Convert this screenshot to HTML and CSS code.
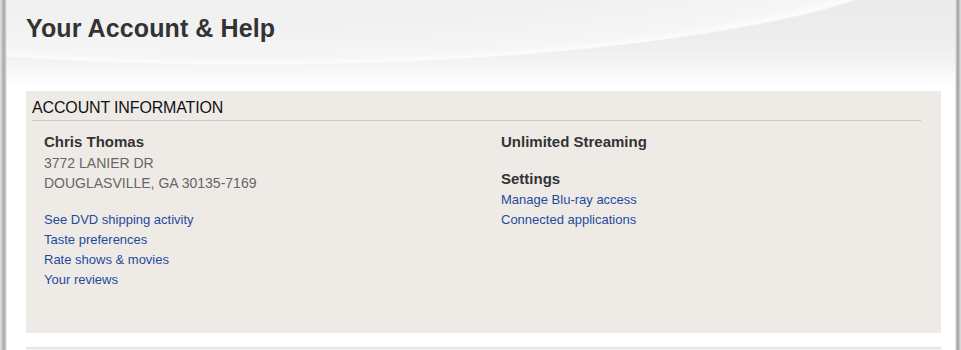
FILE: index.html
```html
<!DOCTYPE html>
<html lang="en">
<head>
<meta charset="utf-8">
<title>Your Account &amp; Help</title>
<link rel="stylesheet" href="styles.css">
</head>
<body>
<div class="frame">
  <header class="page-head">
    <h1 class="page-title">Your Account &amp; Help</h1>
  </header>
  <section class="panel">
    <h2 class="panel-title">ACCOUNT INFORMATION</h2>
    <div class="cols">
      <div class="col">
        <div class="name">Chris Thomas</div>
        <div class="address">
          <div>3772 LANIER DR</div>
          <div>DOUGLASVILLE, GA 30135-7169</div>
        </div>
        <ul class="links links-gap">
          <li><a href="#">See DVD shipping activity</a></li>
          <li><a href="#">Taste preferences</a></li>
          <li><a href="#">Rate shows &amp; movies</a></li>
          <li><a href="#">Your reviews</a></li>
        </ul>
      </div>
      <div class="col">
        <div class="name">Unlimited Streaming</div>
        <div class="name settings">Settings</div>
        <ul class="links">
          <li><a href="#">Manage Blu-ray access</a></li>
          <li><a href="#">Connected applications</a></li>
        </ul>
      </div>
    </div>
  </section>
  <section class="panel-next"></section>
</div>
</body>
</html>
```
FILE: styles.css
```css
html, body {
  margin: 0;
  padding: 0;
}
body {
  background:
    linear-gradient(to right, #e6e6e6 0, #c4c4c4 2px, #a8a8a8 4px, #b8b8b8 5px, #dcdcdc 6px, #f4f4f4 7px, transparent 7px),
    linear-gradient(to left, #e2e2e2 0, #bcbcbc 2px, #9e9e9e 3px, #b0b0b0 4px, #d6d6d6 5px, #f2f2f2 6px, transparent 6px),
    #ffffff;
  font-family: "Liberation Sans", Arial, sans-serif;
  height: 350px;
  overflow: hidden;
}
.frame {
  margin: 0 6px 0 7px;
}
.page-head {
  height: 91px;
  box-sizing: border-box;
  padding: 13px 0 0 19px;
  background:
    radial-gradient(ellipse 700px 128px at 243px -63px, #eeeeee 0%, #f1f1f1 70%, #f6f6f6 95%, #fcfcfc 99%, rgba(255,255,255,0) 100%),
    linear-gradient(to bottom, #ebebeb 0, #eeeeee 50%, #f7f7f7 78%, #ffffff 95%);
}
.page-title {
  margin: 0;
  font-size: 25px;
  line-height: 30px;
  font-weight: bold;
  color: #333333;
  letter-spacing: 0.1px;
}
.panel {
  margin: 0 14px 0 19px;
  height: 242px;
  box-sizing: border-box;
  padding: 7px 20px 0 6px;
  background: #eeebe7;
}
.panel-title {
  margin: 0;
  font-size: 16px;
  line-height: 19px;
  font-weight: normal;
  color: #111111;
  padding-bottom: 3px;
  border-bottom: 1px solid #cbc8c4;
  letter-spacing: -0.15px;
}
.cols {
  display: grid;
  grid-template-columns: 457px 1fr;
  padding: 11px 0 0 12px;
}
.name {
  font-size: 15px;
  line-height: 20px;
  font-weight: bold;
  color: #333333;
}
.settings {
  margin-top: 17px;
}
.address {
  margin-top: 1px;
  font-size: 14px;
  line-height: 20px;
  color: #666666;
}
.links {
  list-style: none;
  margin: 1px 0 0;
  padding: 0;
  font-size: 13px;
  line-height: 20px;
}
.links-gap {
  margin-top: 17px;
}
.links a {
  color: #1f4a9b;
  text-decoration: none;
}
.panel-next {
  margin: 14px 14px 0 19px;
  height: 1px;
  border-top: 2px solid #e6e6e6;
  background: #f6f5f3;
}
```
